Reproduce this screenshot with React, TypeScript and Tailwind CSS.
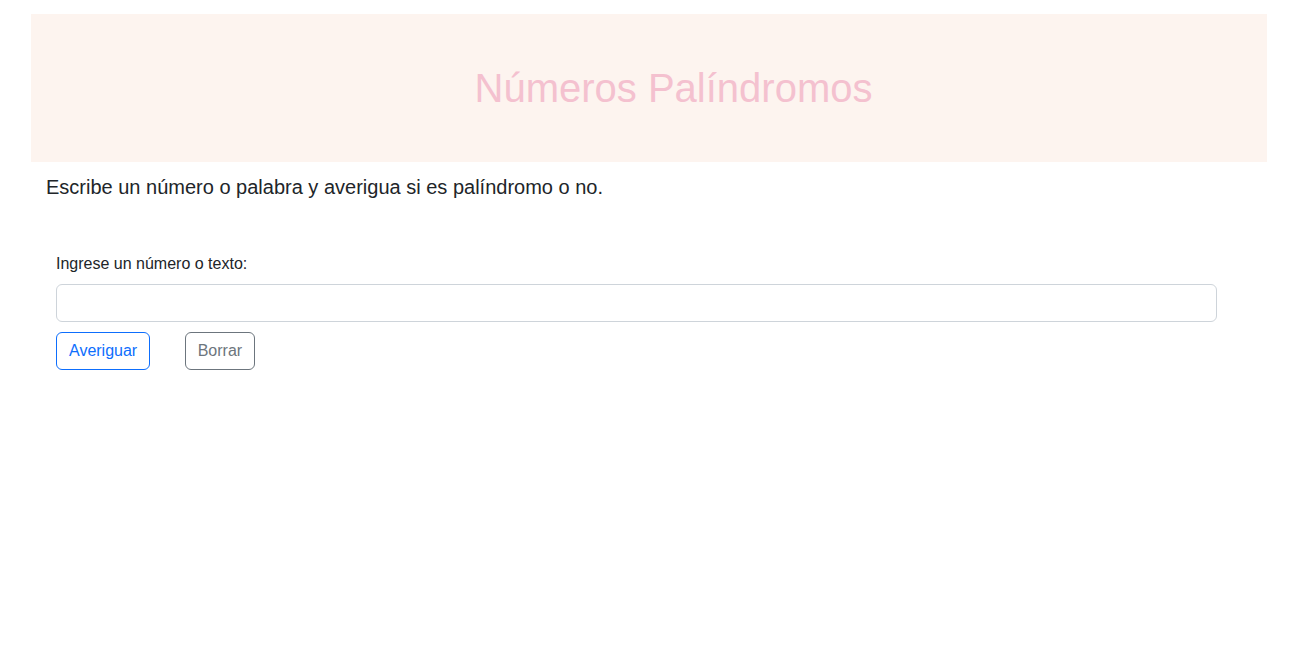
import React, { useState } from 'react';

const App: React.FC = () => {
  const [value, setValue] = useState('');

  return (
    <div className="min-h-screen bg-white font-['Liberation_Sans',Arial,sans-serif] text-[#212529] pt-[14px]">
      {/* HEADER */}
      <div className="ml-[31px] w-[1236px] h-[148px] bg-[#fdf4ef] flex items-center justify-center pl-[49px]">
        <h1 className="text-[40px] leading-[48px] text-[#f4c1cf]">Números Palíndromos</h1>
      </div>

      {/* LEAD */}
      <p className="ml-[46px] mt-[10px] text-[20px] leading-[30px]">
        Escribe un número o palabra y averigua si es palíndromo o no.
      </p>

      {/* FORM */}
      <div className="ml-[56px] w-[1161px] mt-[50px]">
        <label className="block text-[16px] leading-[24px] mb-[8px]">Ingrese un número o texto:</label>
        <input
          value={value}
          onChange={(e) => setValue(e.target.value)}
          className="block w-full h-[38px] border border-[#ced4da] rounded-[6px] px-3 outline-none"
        />
        <div className="flex gap-[35px] mt-[10px]">
          <button className="h-[38px] px-3 border border-[#0d6efd] text-[#0d6efd] rounded-[6px] text-[16px]">
            Averiguar
          </button>
          <button
            onClick={() => setValue('')}
            className="h-[38px] px-[11.5px] border border-[#6c757d] text-[#6c757d] rounded-[6px] text-[16px]"
          >
            Borrar
          </button>
        </div>
      </div>
    </div>
  );
};

export default App;
